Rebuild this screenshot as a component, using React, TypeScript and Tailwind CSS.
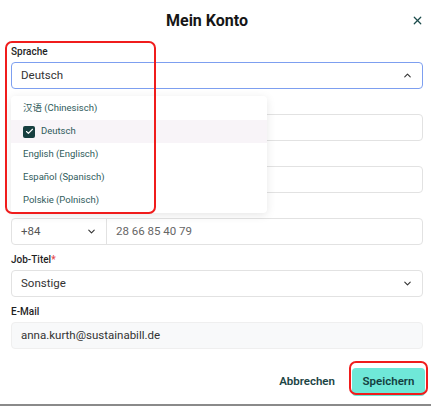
import { Check, ChevronDown, ChevronUp, X } from 'lucide-react';

const languages = [
  { label: '汉语 (Chinesisch)', selected: false },
  { label: 'Deutsch', selected: true },
  { label: 'English (Englisch)', selected: false },
  { label: 'Español (Spanisch)', selected: false },
  { label: 'Polskie (Polnisch)', selected: false },
];

function Label({ children, required }: { children?: React.ReactNode; required?: boolean }) {
  return (
    <div className="h-[14px] mb-[3px] text-[10px] leading-[14px] font-medium text-[#1f1f1f]">
      {children}
      {required && <span className="text-[#e5484d]">*</span>}
    </div>
  );
}

export default function App() {
  return (
    <div
      className="relative w-[437px] h-[407px] overflow-hidden bg-white"
      style={{ fontFamily: 'Roboto, "Noto Sans", "Noto Sans CJK SC", sans-serif' }}
    >
      <div className="relative h-[45px] pt-[9px] pr-[23px] text-center">
        <h1 className="text-[16px] leading-[24px] font-bold text-[#161616]">Mein Konto</h1>
        <X className="absolute right-[13px] top-[14px] w-[13px] h-[13px] text-[#1b4b4b]" strokeWidth={2.2} />
      </div>

      <div className="pl-[11px] pr-[14px]">
        <div className="h-[52px]">
          <Label>Sprache</Label>
          <div className="flex items-center justify-between h-[27px] px-[9px] rounded-[4px] border-[1.5px] border-[#7d9ff0] text-[11.5px] text-[#333]">
            <span>Deutsch</span>
            <ChevronUp className="w-[11px] h-[11px] text-[#333]" strokeWidth={2.4} />
          </div>
        </div>

        {/* fields hidden behind the open menu: labels covered */}
        <div className="h-[52px]">
          <Label />
          <div className="h-[27px] rounded-[4px] border border-[#e2e2e2]" />
        </div>

        <div className="h-[52px]">
          <Label />
          <div className="h-[27px] rounded-[4px] border border-[#e2e2e2]" />
        </div>

        <div className="h-[52px]">
          <Label />
          <div className="flex h-[27px] rounded-[4px] border border-[#e2e2e2] text-[11.5px]">
            <div className="flex items-center justify-between w-[95px] pl-[9px] pr-[9px] border-r border-[#e2e2e2] text-[#555]">
              <span>+84</span>
              <ChevronDown className="w-[11px] h-[11px] text-[#333]" strokeWidth={2.4} />
            </div>
            <div className="flex items-center pl-[9px] text-[#666]">28 66 85 40 79</div>
          </div>
        </div>

        <div className="h-[52px]">
          <Label required>Job-Titel</Label>
          <div className="flex items-center justify-between h-[27px] px-[9px] rounded-[4px] border border-[#e2e2e2] text-[11.5px] text-[#333]">
            <span>Sonstige</span>
            <ChevronDown className="w-[11px] h-[11px] text-[#333]" strokeWidth={2.4} />
          </div>
        </div>

        <div className="h-[52px]">
          <Label>E-Mail</Label>
          <div className="flex items-center h-[27px] px-[9px] rounded-[4px] border border-[#efefef] bg-[#f8f9fa] text-[11.5px] text-[#333]">
            anna.kurth@sustainabill.de
          </div>
        </div>

        <div className="flex items-center justify-end gap-[17px] mt-[11px] -mr-[2px]">
          <button className="text-[11.5px] font-semibold text-[#1b4444]">Abbrechen</button>
          <button className="h-[28px] w-[73px] rounded-[4px] bg-[#6fe8d8] text-[11.5px] font-semibold text-[#143f3f]">
            Speichern
          </button>
        </div>
      </div>

      <div className="absolute left-0 top-[404px] w-[431px] h-[2px] bg-[#8a8a8a]" />

      <div className="absolute left-[11px] top-[96px] w-[256px] py-[1px] bg-white rounded-[4px] shadow-[0_2px_10px_rgba(0,0,0,0.10)]">
        {languages.map((l) => (
          <div
            key={l.label}
            className={`flex items-center h-[23px] px-[12px] text-[9.5px] text-[#2f5b5b] ${l.selected ? 'bg-[#f8f4f8]' : ''}`}
          >
            {l.selected && (
              <span className="flex items-center justify-center w-[12px] h-[12px] mr-[6px] rounded-[2px] bg-[#173f3f]">
                <Check className="w-[9px] h-[9px] text-white" strokeWidth={3} />
              </span>
            )}
            {l.label}
          </div>
        ))}
      </div>

      <div className="absolute left-[5px] top-[41px] w-[151px] h-[173px] rounded-[7px] border-2 border-[#f01c1c]" />
      <div className="absolute left-[349px] top-[361px] w-[79px] h-[34px] rounded-[7px] border-2 border-[#f01c1c]" />
    </div>
  );
}
